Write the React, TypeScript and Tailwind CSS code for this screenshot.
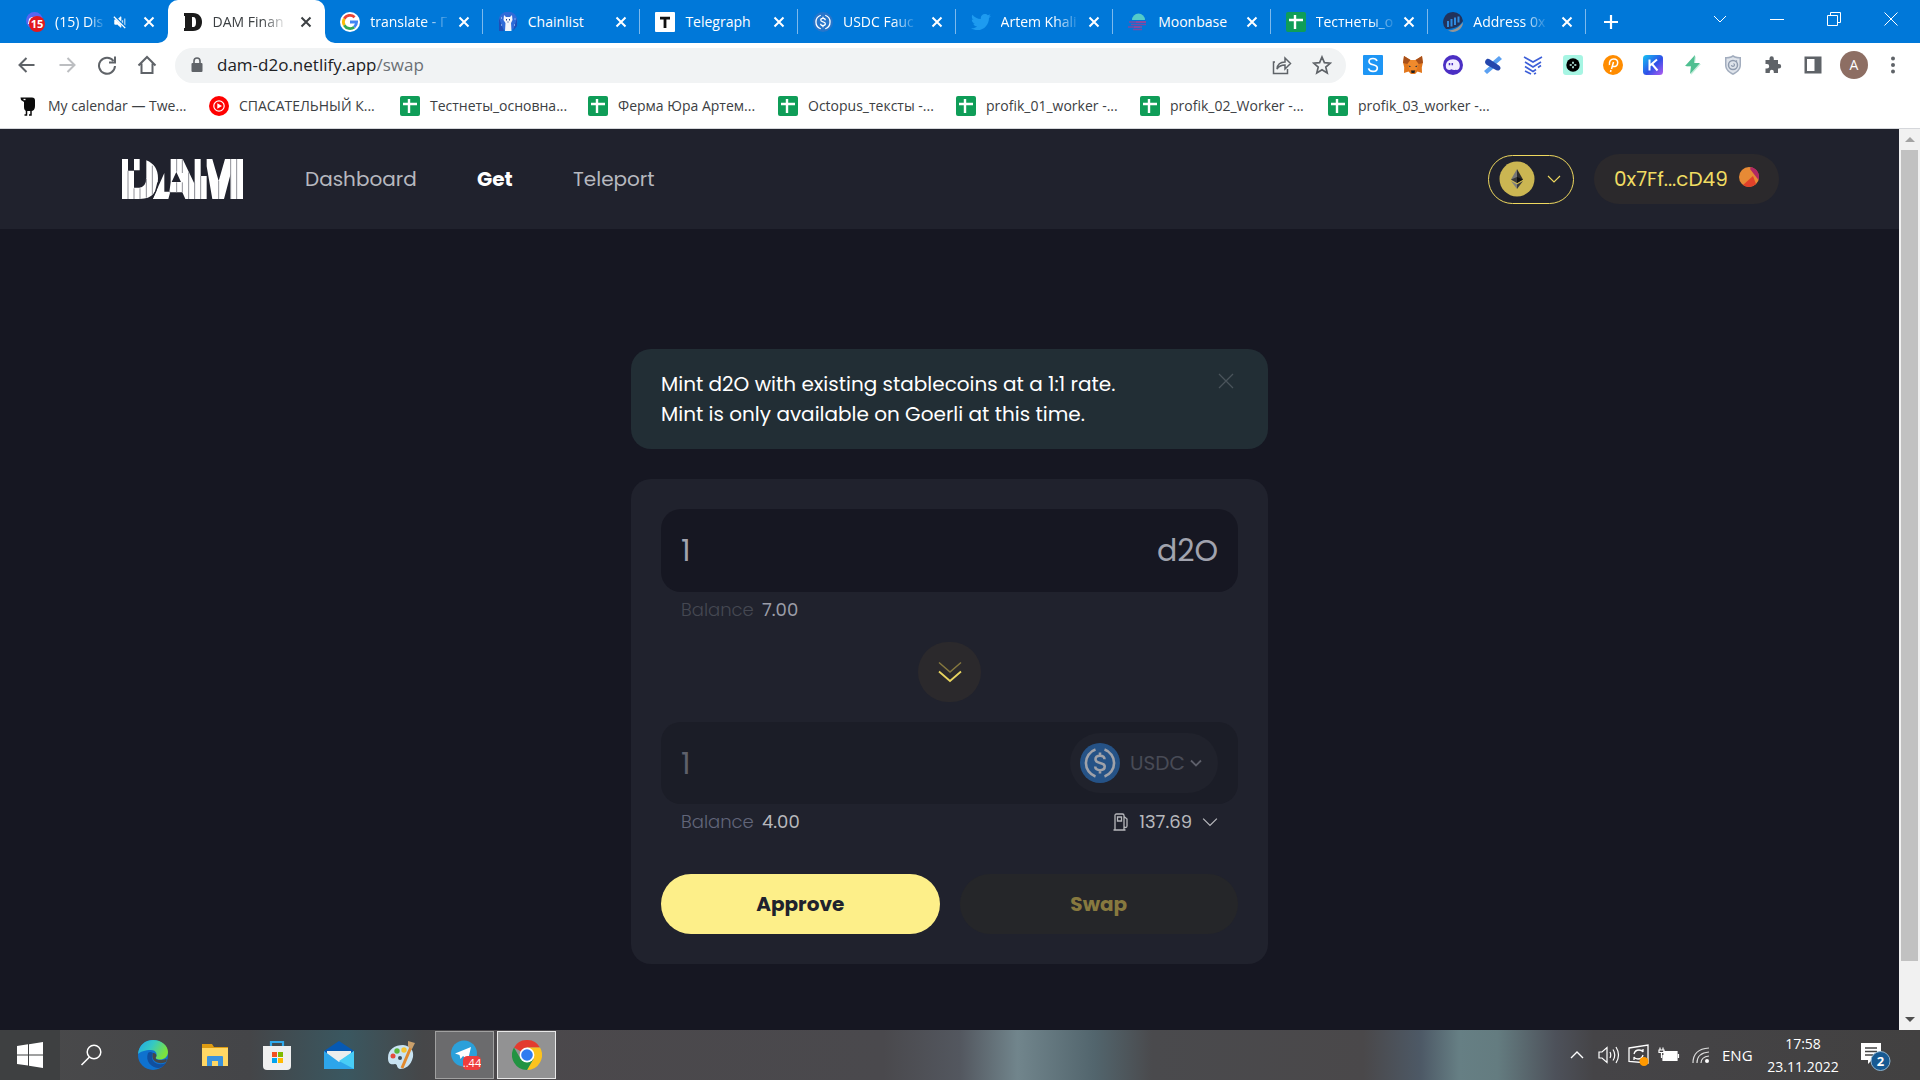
import React from "react";
import type { ReactNode } from "react";
import { FaTwitter } from "react-icons/fa";

const ui = "font-['Segoe_UI','Open_Sans',sans-serif]";

function Svg({ box, className, children }: { box: string; className: string; children: ReactNode }) {
  return (
    <svg viewBox={box} className={className} fill="none" aria-hidden="true">
      {children}
    </svg>
  );
}

function SheetIcon() {
  return (
    <Svg box="0 0 20 20" className="h-5 w-5 shrink-0">
      <rect width="20" height="20" rx="2" fill="#0f9d58" />
      <path d="M9 3v14M3 8h14" stroke="#fff" strokeWidth="2.4" />
    </Svg>
  );
}

function UsdcIcon({ className, color }: { className: string; color: string }) {
  return (
    <Svg box="0 0 40 40" className={className}>
      <circle cx="20" cy="20" r="20" fill={color} />
      <g stroke="currentColor" strokeWidth="2.6">
        <path d="M15.500 6.500A14.300 14.300 0 0 0 15.500 33.500M24.500 6.500A14.300 14.300 0 0 1 24.500 33.500" />
        <path d="M24.500 16.300c0-2.500-2-3.600-4.500-3.600s-4.500 1.200-4.500 3.500c0 2.600 2.300 3.200 4.500 3.700s4.700 1.100 4.700 3.700c0 2.400-2.200 3.600-4.700 3.600s-4.800-1.200-4.800-3.800M20 9.500v3.400M20 27v3.500" />
      </g>
    </Svg>
  );
}

const favicons: Record<string, ReactNode> = {
  discord: (
    <Svg box="0 0 20 20" className="h-5 w-5 shrink-0">
      <circle cx="9.500" cy="8.500" r="8.500" fill="#5865f2" />
      <path d="M4 7c2-3 9-3 11 0l1 5H3z" fill="#fff" />
      <circle cx="12" cy="12" r="8" fill="#e3171e" />
      <text x="12" y="16" textAnchor="middle" fontSize="11" fontWeight="700" fill="#fff" fontFamily="Open Sans">15</text>
    </Svg>
  ),
  dam: (
    <Svg box="0 0 20 20" className="h-5 w-5 shrink-0">
      <path d="M1 1h9c6 0 9 4 9 9s-3 9-9 9H1V16h1V4H1zM9 5v10h1c2.500 0 3-2 3-5s-.5-5-3-5z" fill="#1b1b1b" fillRule="evenodd" />
    </Svg>
  ),
  google: (
    <Svg box="0 0 20 20" className="h-5 w-5 shrink-0">
      <circle cx="10" cy="10" r="10" fill="#fff" />
      <g strokeWidth="2.800">
        <path d="M4.300 6.700A6.600 6.600 0 0 1 14.600 5.200" stroke="#ea4335" />
        <path d="M4.300 6.700A6.600 6.600 0 0 0 4.300 13.300" stroke="#fbbc05" />
        <path d="M4.300 13.300A6.600 6.600 0 0 0 14.200 15.100" stroke="#34a853" />
        <path d="M14.200 15.100A6.600 6.600 0 0 0 16.600 10H10" stroke="#4285f4" />
      </g>
    </Svg>
  ),
  chainlist: (
    <Svg box="0 0 20 20" className="h-5 w-5 shrink-0">
      <circle cx="10" cy="9" r="9.500" fill="#2f6bd8" />
      <path d="M1 6v13h5zM19 6v8l-4 5z" fill="#1d4fb8" />
      <path d="M6 3l2 2h4l2-2 .5 5-1.500 3 .5 8H7l.5-8L5.500 8z" fill="#f2f5fb" />
      <path d="M8.500 7v1.500M11.500 7v1.500M9.500 10h1" stroke="#24418a" />
      <path d="M3 6h1M16.500 7h1M3 13h1M16 13h1" stroke="#cfe0ff" />
    </Svg>
  ),
  telegraph: (
    <Svg box="0 0 20 20" className="h-5 w-5 shrink-0">
      <rect width="20" height="20" rx="1" fill="#fff" />
      <path d="M5 6.200h10M10 5v11" stroke="#111" strokeWidth="2.800" />
    </Svg>
  ),
  usdc: <UsdcIcon className="h-5 w-5 shrink-0 text-white" color="#2775ca" />,
  twitter: <FaTwitter className="h-5 w-5 shrink-0 text-[#1d9bf0]" />,
  moonbase: (
    <Svg box="0 0 20 20" className="h-5 w-5 shrink-0">
      <path d="M4 8a6.500 6.500 0 0 1 13 0z" fill="#53cbc9" />
      <path d="M1 10h17M3 12.500h15M0 15h12M5 17.500h9" stroke="#7a4aa5" strokeWidth="1.500" />
      <path d="M8 10h10M6 15h8" stroke="#b8408f" strokeWidth="1" />
    </Svg>
  ),
  sheet: <SheetIcon />,
  etherscan: (
    <Svg box="0 0 20 20" className="h-5 w-5 shrink-0">
      <path d="M10 0a10 10 0 0 1 10 9c-4 6-9 8-17 8A10 10 0 0 1 10 0z" fill="#21325b" />
      <path d="M20 10A10 10 0 0 1 5 18.600C12 18 17 15 20 10z" fill="#979695" />
      <path d="M5 9v6M8.500 7v7.500M12 5.500v7.500M15.500 4.500v6" stroke="#2f8be0" strokeWidth="2" />
    </Svg>
  ),
};

const fade = "[mask-image:linear-gradient(to_right,#000_70%,rgba(0,0,0,0.15))]";

const tabs = [
  { icon: "discord", title: "(15) Dis", muted: true, mask: fade },
  { icon: "dam", title: "DAM Finan", active: true, mask: fade },
  { icon: "google", title: "translate - Г", mask: fade },
  { icon: "chainlist", title: "Chainlist", mask: "" },
  { icon: "telegraph", title: "Telegraph", mask: "" },
  { icon: "usdc", title: "USDC Fauc", mask: fade },
  { icon: "twitter", title: "Artem Khali", mask: fade },
  { icon: "moonbase", title: "Moonbase", mask: "" },
  { icon: "sheet", title: "Тестнеты_о", mask: fade },
  { icon: "etherscan", title: "Address 0x", mask: fade },
];

function TabStrip() {
  return (
    <div className={`flex h-[43px] items-center bg-[#0078d9] pl-2.5 text-[14px] text-white ${ui}`}>
      <div className="flex h-full w-[1576px] min-w-0 shrink">
        {tabs.map((t, i) => (
          <div
            key={t.title}
            className={`relative flex h-full min-w-0 flex-1 items-center pl-[15px] pr-[9px] ${t.active ? "rounded-t-[10px] bg-white text-[#3c4043]" : ""}`}
          >
            {favicons[t.icon]}
            <span className={`ml-2.5 whitespace-nowrap ${t.mask}`}>{t.title}</span>
            {t.muted && (
              <Svg box="0 0 16 16" className="ml-2.5 h-3.5 w-3.5 shrink-0">
                <path d="M2 5.500h3L9 2v12L5 10.500H2zM11 6v4M13.500 4v8" fill="#fff" stroke="#fff" />
                <path d="M1 1l14 14" stroke="#0078d9" strokeWidth="2.500" />
                <path d="M1 2l13 13" stroke="#fff" strokeWidth="1.500" />
              </Svg>
            )}
            <button aria-label={`Close ${t.title}`} className="ml-auto flex h-5 w-5 shrink-0 items-center justify-center">
              <Svg box="0 0 12 12" className="h-3 w-3">
                <path d="M1.500 1.500l9 9M10.500 1.500l-9 9" stroke="currentColor" strokeWidth="2" />
              </Svg>
            </button>
            {i > 1 && <span className="absolute right-0 top-[9px] h-[25px] w-px bg-[#7db9ec]" />}
            {t.active && (
              <>
                <Svg box="0 0 10 10" className="absolute -left-2.5 bottom-0 h-2.5 w-2.5">
                  <path d="M10 0v10H0A10 10 0 0 0 10 0z" fill="#fff" />
                </Svg>
                <Svg box="0 0 10 10" className="absolute -right-2.5 bottom-0 h-2.5 w-2.5">
                  <path d="M0 0v10h10A10 10 0 0 1 0 0z" fill="#fff" />
                </Svg>
              </>
            )}
          </div>
        ))}
      </div>
      <button aria-label="New tab" className="ml-[17px] h-4 w-4 shrink-0">
        <Svg box="0 0 16 16" className="h-4 w-4"><path d="M8 1v14M1 8h14" stroke="#fff" strokeWidth="2.200" /></Svg>
      </button>
      <div className="ml-auto flex h-[38px] shrink-0 items-center self-start">
        <button aria-label="Search tabs" className="flex w-[57px] justify-center">
          <Svg box="0 0 14 14" className="h-3.5 w-3.5"><path d="M1 4l6 6 6-6" stroke="#fff" /></Svg>
        </button>
        <button aria-label="Minimize" className="flex w-[57px] justify-center">
          <Svg box="0 0 14 14" className="h-3.5 w-3.5"><path d="M0 7.500h14" stroke="#fff" /></Svg>
        </button>
        <button aria-label="Restore" className="flex w-[57px] justify-center">
          <Svg box="0 0 14 14" className="h-3.5 w-3.5"><path d="M.5 3.500h10v10H.5zM3.500 3V.5h10v10H11" stroke="#fff" /></Svg>
        </button>
        <button aria-label="Close window" className="flex w-[58px] justify-center">
          <Svg box="0 0 14 14" className="h-3.5 w-3.5"><path d="M.5.5l13 13M13.500.5l-13 13" stroke="#fff" /></Svg>
        </button>
      </div>
    </div>
  );
}

const extensions: { name: string; art: ReactNode }[] = [
  { name: "S", art: (<><rect width="20" height="20" rx="1" fill="#1e96f5" /><path d="M14 6c-.6-1.800-2-2.500-4-2.500-2.400 0-4 1.200-4 3C6 11 14.300 8.500 14.300 13c0 2-1.800 3.400-4.300 3.400-2.300 0-4-1-4.500-3" stroke="#fff" strokeWidth="1.700" /></>) },
  { name: "MetaMask", art: (<><path d="M1 1l6.500 4h5L19 1l.8 7-1 4.500L19 18l-4.500-1.500L12 19H8l-2.500-2.500L1 18l.2-5.500-1-4.500z" fill="#e2761b" /><path d="M1 1l6.500 4-3 4L0 8zM19 1l-6.500 4 3 4 4.500-1z" fill="#a8501a" /><path d="M4.500 9l3-4h5l3 4-2 6h-7z" fill="#f08a2c" /><path d="M8 15.500h4l-.5 2.500h-3z" fill="#20201f" /><path d="M5.500 10.500l2.500.8-1.500 1zM14.500 10.500l-2.500.8 1.500 1z" fill="#233447" /></>) },
  { name: "Phantom", art: (<><circle cx="10" cy="10" r="10" fill="#4b2fc4" /><path d="M3 12.500C2 7 6 4.200 10 4.200c4.500 0 7 3 6.800 6.800-.2 3-2 4.300-4 3.800-1.800.6-3.400.2-4.300-.5C6.500 15.500 3.500 15 3 12.500z" fill="#f1edff" /><path d="M6.500 8v2.300M9.300 8v2.300" stroke="#4b2fc4" strokeWidth="1.500" /></>) },
  { name: "Satellite", art: (<><path d="M4 19l-3-3 7-6 3 3zM16 1l3 3-7 6-3-3z" fill="#5ba1f2" /><path d="M2.500 5.500c1-2 3-2 4.500-1l9 6c2 1.500 2 3.500.5 4.500s-3 .5-4.500-.5L4 10C2 8.500 1.500 7 2.500 5.500z" fill="#2446ad" /></>) },
  { name: "Layers", art: (<path d="M1 2l9 5 9-5M2 7l8 5 8-5M2 11.500l8 5 3-2M2 16l6 3M15 12.500l3-2M11 19l2-1" stroke="#3d5fd8" strokeWidth="1.600" />) },
  { name: "Dots", art: (<><rect width="20" height="20" rx="3" fill="#a6f5e3" /><circle cx="10" cy="10" r="6.700" fill="#000" /><path d="M10 6.700v2M10 11.300v2M6.700 10h2M11.300 10h2" stroke="#c9fff4" strokeWidth="1.600" /></>) },
  { name: "Polkadot", art: (<><circle cx="10" cy="10" r="10" fill="#ff8c00" /><path d="M8.500 14l2-7M6.500 10c-.7-4 1.500-6 4.200-6 2.500 0 4 1.600 4 3.800 0 2.700-2 4-4.700 3.800M8 15l-.5 2" stroke="#fff" strokeWidth="1.500" /></>) },
  { name: "Keplr", art: (<><defs><linearGradient id="kp" x1="0" y1="0" x2="1" y2="1"><stop stopColor="#15c4f3" /><stop offset=".55" stopColor="#2f50e8" /><stop offset="1" stopColor="#b35cf0" /></linearGradient></defs><rect width="20" height="20" rx="3.500" fill="url(#kp)" /><path d="M6.500 4.500v11M14 4.500l-7 6M9 9l5.500 6.500" stroke="#fff" strokeWidth="2" /></>) },
  { name: "Bolt", art: (<><path d="M13 1L3 12h6l-1 8 10-11h-6z" fill="#c3ecd9" /><path d="M12 0L2 11h6l-1 8L17 8h-6z" fill="#4fbf91" /></>) },
  { name: "Shield", art: (<><path d="M10 0c3 2 6 2 8 2v8c0 5-4 8-8 10-4-2-8-5-8-10V2c2 0 5 0 8-2z" fill="#a2adbe" /><path d="M10 2c2 1.300 4.500 1.500 6.500 1.600V10c0 4-3 6.500-6.500 8.300C6.500 16.500 3.500 14 3.500 10V3.600C5.500 3.500 8 3.300 10 2z" fill="#dfe4eb" /><circle cx="10" cy="10" r="4.500" stroke="#8f9bae" strokeWidth="1.500" /><path d="M8.500 10a1.500 1.500 0 1 0 2-1.500M13 5.500l1 1" stroke="#8f9bae" strokeWidth="1.200" /></>) },
  { name: "Extensions", art: (<path d="M6.500 3.500a2 2 0 0 1 4.300 0V5H15v4h1a2.200 2.200 0 0 1 0 4.400h-1V18h-4.200v-1.200a2 2 0 0 0-4 0V18H2.500v-4.500H4a2.200 2.200 0 0 0 0-4.400H2.500V5h4z" fill="#5f6368" />) },
  { name: "Side panel", art: (<path fillRule="evenodd" d="M1.500 1.500h17v17h-17zM4 4v12h7.500V4z" fill="#5f6368" />) },
];

function Toolbar() {
  return (
    <div className={`flex h-11 items-center bg-white pl-[17px] text-[#5f6368] ${ui}`}>
      {[
        ["Back", "M17.500 10h-15M9.500 3l-7 7 7 7", "text-[#5f6368]"],
        ["Forward", "M2.500 10h15M10.500 3l7 7-7 7", "text-[#bcbec1]"],
        ["Reload", "M16.500 6A8 8 0 1 0 18 11M18 1.500V7.500H12", "text-[#5f6368]"],
        ["Home", "M1.500 10.500L10 2l8.500 8.500M4.500 8.500V18h11V8.500", "text-[#5f6368]"],
      ].map(([n, d, c]) => (
        <button key={n} aria-label={n} className={`mr-5 h-5 w-5 shrink-0 ${c}`}>
          <Svg box="0 0 20 20" className="h-5 w-5"><path d={d} stroke="currentColor" strokeWidth="2" /></Svg>
        </button>
      ))}
      <div className="-ml-0.5 flex h-[35px] min-w-0 flex-1 items-center rounded-full bg-[#f1f3f4] px-3.5">
        <Svg box="0 0 16 18" className="h-[18px] w-4 shrink-0">
          <rect x="2.500" y="7" width="11" height="9" rx="1" fill="#5f6368" />
          <path d="M5 8V5a3 3 0 0 1 6 0v3" stroke="#5f6368" strokeWidth="1.600" />
        </Svg>
        <a href="#swap" className="ml-3 flex-1 text-[17px] text-[#202124]">
          dam-d2o.netlify.app<span className="text-[#6b7075]">/swap</span>
        </a>
        <button aria-label="Share" className="mr-5 h-5 w-5">
          <Svg box="0 0 20 20" className="h-5 w-5"><path d="M3 7H1.500v11.500h14V14M5 14c.5-5 3-7 8-7V3l5.500 5.500L13 14v-4c-4 0-6 1-8 4z" stroke="#5f6368" strokeWidth="1.500" /></Svg>
        </button>
        <button aria-label="Bookmark this tab" className="h-5 w-5">
          <Svg box="0 0 20 20" className="h-5 w-5"><path d="M10 2l2.400 5.600 6 .5-4.600 4 1.400 5.900L10 14.800 4.800 18l1.400-5.900-4.600-4 6-.5z" stroke="#5f6368" strokeWidth="1.700" /></Svg>
        </button>
      </div>
      <div className="ml-[17px] flex shrink-0 items-center gap-5">
        {extensions.map((e) => (
          <button key={e.name} aria-label={e.name} className="h-5 w-5">
            <Svg box="0 0 20 20" className="h-5 w-5">{e.art}</Svg>
          </button>
        ))}
        <button aria-label="Profile" className="-mx-[3px] h-7 w-7 rounded-full bg-[#8d6e63] text-center text-[14px] leading-7 text-white">A</button>
        <button aria-label="Menu" className="-ml-0.5 mr-[17px] h-5 w-5">
          <Svg box="0 0 20 20" className="h-5 w-5">
            <g fill="#5f6368"><circle cx="10" cy="3.500" r="2" /><circle cx="10" cy="10" r="2" /><circle cx="10" cy="16.500" r="2" /></g>
          </Svg>
        </button>
      </div>
    </div>
  );
}

const bookmarks = [
  { label: "My calendar — Twe...", icon: "bird", w: "w-[191px]" },
  { label: "СПАСАТЕЛЬНЫЙ К...", icon: "music", w: "w-[191px]" },
  { label: "Тестнеты_основна...", icon: "sheet", w: "w-[188px]" },
  { label: "Ферма Юра Артем...", icon: "sheet", w: "w-[190px]" },
  { label: "Octopus_тексты -...", icon: "sheet", w: "w-[178px]" },
  { label: "profik_01_worker -...", icon: "sheet", w: "w-[184px]" },
  { label: "profik_02_Worker -...", icon: "sheet", w: "w-[188px]" },
  { label: "profik_03_worker -...", icon: "sheet", w: "w-[188px]" },
];

function Bookmarks() {
  return (
    <nav className={`flex h-[42px] border-b border-[#d5d7db] bg-white pb-1 pl-[18px] text-[14px] text-[#3c4043] ${ui}`}>
      {bookmarks.map((b) => (
        <a key={b.label} href="#bookmark" className={`flex items-center gap-2.5 whitespace-nowrap ${b.w}`}>
          {b.icon === "sheet" && <SheetIcon />}
          {b.icon === "bird" && (
            <Svg box="0 0 20 20" className="h-5 w-5 shrink-0">
              <path d="M2.500 1.500H14q3 0 3 3V10q0 5-4 5H9q-3 0-3-4V6L3 4z" fill="#0b0b0b" />
              <path d="M8.500 14v5H6.500M13 14v5h-2" stroke="#0b0b0b" strokeWidth="1.500" />
              <path d="M5.500 3.500h2" stroke="#fff" strokeWidth="1.300" />
            </Svg>
          )}
          {b.icon === "music" && (
            <Svg box="0 0 20 20" className="h-5 w-5 shrink-0">
              <circle cx="10" cy="10" r="10" fill="#f00" />
              <circle cx="10" cy="10" r="5.200" stroke="#fff" strokeWidth="1.200" />
              <path d="M8.300 7.200v5.600L13 10z" fill="#fff" />
            </Svg>
          )}
          {b.label}
        </a>
      ))}
    </nav>
  );
}

function DamLogo() {
  return (
    <svg viewBox="0 0 363 120" className="h-10 w-[121px] shrink-0" role="img" aria-label="DAM">
      <g fill="#fff">
        <path d="M0 0h18v35h18v85H0zM36 0h17v34H36z" />
        <path d="M73 4q35 14 35 54q0 62-54 62H36V86h16q21-4 21-30z" />
        <path fillRule="evenodd" d="M92 120L127 42v56h18L139 120zM146 0h36l36 76v44h-28l-9-20h-17l-22 0 4-30zM163 39l-14 30h28z" />
        <path d="M218 0h18v51h18v69h-36zM254 0h17l19 66 19-66h54v120h-37V44l-20 76h-35L254 22z" />
      </g>
      <path d="M108 70Q104 96 90 120" stroke="#20222d" strokeWidth="4" fill="none" />
      <path d="M18 35v85M36 88v32M54 88v32M73 60v56M91 20v88M164 0v38M181 0v42M164 70v30M181 70v30M200 40v80M218 70v50M236 51v69M290 66v54M326 0v120M344 0v120" stroke="#8f9097" strokeWidth="3" fill="none" />
    </svg>
  );
}

function Chevron({ className }: { className: string }) {
  return <Svg box="0 0 14 14" className={className}><path d="M1 4l6 6 6-6" stroke="currentColor" strokeWidth="1.100" /></Svg>;
}

function Header() {
  return (
    <header className="flex h-[100px] shrink-0 items-center bg-[#20222d] px-[120px] text-[20px] text-[#b6b8bf]">
      <div className="ml-0.5"><DamLogo /></div>
      <nav className="ml-[62px] flex gap-[60px]">
        <a href="#dashboard" className="w-[112px]">Dashboard</a>
        <a href="#get" className="w-9 font-bold text-white">Get</a>
        <a href="#teleport">Teleport</a>
      </nav>
      <button aria-label="Select network" className="ml-auto flex h-[49px] w-[86px] items-center justify-between rounded-full border border-[#efd95f] pl-2.5 pr-3 text-[#efd95f]">
        <Svg box="0 0 36 36" className="h-9 w-9">
          <circle cx="18" cy="18" r="17.500" fill="#cbb652" />
          <path d="M18 8l-6 10.500 6 3.500z" fill="#777" />
          <path d="M18 8l6 10.500-6 3.500z" fill="#2d2d2d" />
          <path d="M12 18.500l6-2.500v6z" fill="#3a3a3a" />
          <path d="M18 16l6 2.500-6 3.500z" fill="#111" />
          <path d="M12 20l6 8v-4.500z" fill="#808080" />
          <path d="M24 20l-6 8v-4.500z" fill="#3a3a3a" />
        </Svg>
        <Chevron className="h-3.5 w-3.5" />
      </button>
      <button className="ml-5 flex h-[50px] w-[185px] items-center justify-between rounded-full bg-[#2b292c] px-5 text-[#f0dc62]">
        0x7Ff...cD49
        <Svg box="0 0 20 20" className="mb-1 h-5 w-5">
          <circle cx="10" cy="10" r="10" fill="#e78a35" />
          <path d="M12 0a10 10 0 0 1 7.500 13L11 2z" fill="#b12863" />
          <path d="M4 18l10-9 3 8a10 10 0 0 1-13 1z" fill="#e1412a" />
        </Svg>
      </button>
    </header>
  );
}

function SwapPage() {
  return (
    <main className="flex-1 bg-[#161722] pt-[120px]">
      <div className="mx-auto w-[637px]">
        <section className="flex h-[100px] items-start justify-between rounded-[20px] bg-[#222e35] px-[30px] pt-5 text-[20px] leading-[30px] text-white">
          <p>
            Mint d2O with existing stablecoins at a 1:1 rate.
            <br />
            Mint is only available on Goerli at this time.
          </p>
          <button aria-label="Dismiss" className="mr-1 mt-1">
            <Svg box="0 0 16 16" className="h-4 w-4"><path d="M1 1l14 14M15 1L1 15" stroke="#4a545b" strokeWidth="1.300" /></Svg>
          </button>
        </section>
        <form className="mt-[30px] rounded-[20px] bg-[#20222d] p-[30px]" onSubmit={(e) => e.preventDefault()}>
          <div className="flex h-[83px] items-center rounded-[20px] bg-[#161722] px-5 text-[30px] text-[#a1a3ae]">
            <input aria-label="d2O amount" defaultValue="1" className="min-w-0 flex-1 bg-transparent outline-none" />
            <span>d2O</span>
          </div>
          <p className="flex h-[50px] gap-2.5 px-5 pt-1 text-[18px] text-[#454852]">
            <span className="w-[71px] font-light">Balance</span>
            <span className="text-[#9b9da8]">7.00</span>
          </p>
          <button type="button" aria-label="Switch direction" className="mx-auto flex h-[60px] w-[63px] items-center justify-center rounded-full bg-[#2b292c]">
            <Svg box="0 0 24 24" className="h-6 w-6">
              <path d="M1 2.500L12 12 23 2.500" stroke="#85783f" strokeWidth="1.500" />
              <path d="M1 11.500L12 21l11-9.500" stroke="#e8d45f" strokeWidth="1.800" />
            </Svg>
          </button>
          <div className="mt-5 flex h-[82px] items-center rounded-[20px] bg-[#1b1d27] px-5 text-[30px] text-[#5e606b]">
            <input aria-label="USDC amount" defaultValue="1" className="min-w-0 flex-1 bg-transparent outline-none" />
            <label className="flex h-[60px] w-[148px] items-center rounded-full bg-[#20222c] pl-2.5 text-[20px] text-[#484b56]">
              <UsdcIcon className="h-10 w-10 text-[#a0a2a9]" color="#255286" />
              <select aria-label="Token" className="ml-2.5 w-[60px] appearance-none bg-transparent outline-none">
                <option>USDC</option>
              </select>
              <Svg box="0 0 12 12" className="h-3 w-3"><path d="M1 3.500L6 8.500 11 3.500" stroke="#5e606b" strokeWidth="1.800" /></Svg>
            </label>
          </div>
          <div className="flex h-[70px] items-start px-5 pt-1 text-[18px] text-[#62667a]">
            <span className="w-[71px] font-light">Balance</span>
            <span className="ml-2.5 text-[#b7b8bc]">4.00</span>
            <button type="button" className="ml-auto flex items-center gap-2.5 text-[#b7b8bc]">
              <Svg box="0 0 16 18" className="h-[18px] w-4">
                <path d="M2 17V2.500Q2 1 3.500 1h6Q11 1 11 2.500V17M.5 17h12M4.500 4h4v4h-4zM11 3.500l3 2.500v7q0 1.500-1.500 1.500T11 13" stroke="currentColor" strokeWidth="1.300" />
              </Svg>
              <span>137.69</span>
              <Chevron className="h-4 w-4" />
            </button>
          </div>
          <div className="grid grid-cols-2 gap-5 text-[20px] font-bold">
            <button type="submit" className="h-[60px] rounded-full bg-[#fdef89] text-[#20222d]">Approve</button>
            <button type="button" className="h-[60px] rounded-full bg-[#252629] text-[#87793f]">Swap</button>
          </div>
        </form>
      </div>
    </main>
  );
}

function Scrollbar() {
  return (
    <div className="flex w-[21px] shrink-0 flex-col items-center justify-between bg-[#f1f1f1]">
      <Svg box="0 0 10 5" className="my-2 h-[5px] w-2.5 shrink-0"><path d="M0 5l5-5 5 5z" fill="#a3a3a3" /></Svg>
      <div className="mb-auto h-[90%] w-[17px] bg-[#c1c1c1]" />
      <Svg box="0 0 10 5" className="my-2 h-[5px] w-2.5 shrink-0"><path d="M0 0l5 5 5-5z" fill="#505050" /></Svg>
    </div>
  );
}

const apps: { name: string; art: ReactNode }[] = [
  { name: "Edge", art: (<><defs><linearGradient id="eg" x1="0" y1="0" x2="1" y2=".4"><stop stopColor="#21a6e8" /><stop offset=".5" stopColor="#35c8c3" /><stop offset="1" stopColor="#7be23e" /></linearGradient></defs><circle cx="15" cy="15" r="15" fill="#0f72cf" /><path d="M0 14C1 5 7 0 15 0c9 0 15 6 15 12 0 5-4 7.500-8 7.500-3.500 0-5-1.200-4-2.500 1.500-2 .5-7-5-7C7 10 2 12 0 14z" fill="url(#eg)" /><path d="M10 13c-3 8 3 15 11 15 3-.5 6-3 7-5-7 3-14 0-14-6 0-2 .5-3 1-4-2-1.500-4-1-5 0z" fill="#114f9e" /><path d="M15 13c-2 5 1 9 6 10 3 .5 6-.5 7-1 1-2 1-3 0-3-2 1-4 1-6 1-4 0-5-1.500-4-3 1-1.500 0-4-3-4z" fill="#464748" /></>) },
  { name: "File Explorer", art: (<><path d="M2 4h10l2 3h14v19H2z" fill="#dd9b12" /><path d="M2 8h26v18H2z" fill="#ffd764" /><path d="M7 26v-9q0-1 1-1h14q1 0 1 1v9h-5v-5h-6v5z" fill="#3b92dc" /></>) },
  { name: "Store", art: (<><path d="M9 8V2h12v6" stroke="#2fa9ec" strokeWidth="2.200" /><path d="M1 6h28v20q0 4-4 4H5q-4 0-4-4z" fill="#efefef" /><path d="M10 12h5v5h-5z" fill="#f25022" /><path d="M16 12h5v5h-5z" fill="#7fba00" /><path d="M10 18h5v5h-5z" fill="#00a4ef" /><path d="M16 18h5v5h-5z" fill="#ffb900" /></>) },
  { name: "Mail", art: (<><path d="M0 11L15 1l15 10v3H0z" fill="#0659b3" /><path d="M3 11h24v12H3z" fill="#ededed" /><path d="M0 11l15 11 15-11v18H0z" fill="#2da5ea" /><path d="M30 11v18L15 21z" fill="#48cdf6" /></>) },
  { name: "Paint", art: (<><path d="M2 18C2 9 9 5 17 5c8 1 11 6 10 12-2 9-8 12-13 12-4-1-2-5-5-5-4 1-7 0-7-6z" fill="#c8e3f2" /><circle cx="7" cy="16" r="2.500" fill="#e44b3c" /><circle cx="11" cy="11" r="2.700" fill="#5bb53d" /><circle cx="18" cy="10" r="2.700" fill="#f6c432" /><circle cx="14" cy="18" r="2" fill="#3b4c59" /><path d="M25 7L16 28" stroke="#e18a2f" strokeWidth="3" /><path d="M22 1l7 2-3 6-4-2z" fill="#c9a06c" /></>) },
];

function Taskbar() {
  return (
    <footer className={`flex h-[50px] shrink-0 items-center bg-[linear-gradient(90deg,#4a4a4b_0%,#444548_13%,#3a5760_18%,#464749_22%,#4b484b_25%,#4a494d_46%,#53575f_50%,#71858c_53%,#52656d_57%,#4a4a4d_60%,#4a484a_71%,#4d5966_74%,#667f84_76%,#647c80_78%,#4d515a_81%,#454447_83%,#424141_100%)] text-[15px] text-white ${ui}`}>
      <button aria-label="Start" className="flex h-full w-[60px] items-center justify-center bg-[#3e4041]">
        <Svg box="0 0 26 26" className="h-[26px] w-[26px]"><path d="M0 4l11-1.700V12.500H0zM12 2.200L26 0v12.500H12zM0 13.500h11v10L0 22zM12 13.500h14V26l-14-2.200z" fill="#fff" /></Svg>
      </button>
      <button aria-label="Search" className="flex h-full w-[62px] items-center justify-center">
        <Svg box="0 0 22 22" className="h-[22px] w-[22px]"><circle cx="14" cy="8" r="6.800" stroke="#fff" strokeWidth="1.500" /><path d="M9.500 13L1.500 21" stroke="#fff" strokeWidth="1.600" /></Svg>
      </button>
      {apps.map((a) => (
        <button key={a.name} aria-label={a.name} className="flex h-full w-[62px] items-center justify-center">
          <Svg box="0 0 30 30" className="h-[30px] w-[30px]">{a.art}</Svg>
        </button>
      ))}
      <button aria-label="Telegram" className="ml-[3px] flex h-12 w-[59px] items-center justify-center border border-[#a0a0a0] bg-[#6b6b6d]">
        <Svg box="0 0 32 30" className="h-[30px] w-8">
          <circle cx="15" cy="13.500" r="13" fill="#2ba0da" />
          <path d="M6 13.500L22 7l-3 13-5-4-2.500 3-1-4z" fill="#fff" />
          <rect x="14" y="16" width="18" height="14" rx="4.500" fill="#ee3d3d" />
          <text x="23" y="27" textAnchor="middle" fontSize="11" fill="#fff" fontFamily="Open Sans">..44</text>
        </Svg>
      </button>
      <button aria-label="Chrome" className="ml-[3px] flex h-12 w-[59px] items-center justify-center border border-[#e8e8e8] bg-[#929293]">
        <Svg box="0 0 30 30" className="h-[30px] w-[30px]">
          <path d="M15 15L2 7.500A15 15 0 0 1 28 7.500H15z" fill="#e33b2e" />
          <path d="M28 7.500A15 15 0 0 1 15 30l6.500-11.200L15 7.500z" fill="#fcc31e" />
          <path d="M2 7.500A15 15 0 0 0 15 30l6.500-11.200-13 0z" fill="#229342" />
          <circle cx="15" cy="15" r="7.400" fill="#fff" />
          <circle cx="15" cy="15" r="5.800" fill="#2f7cf0" />
        </Svg>
      </button>
      <div className="ml-auto flex items-center">
        <Svg box="0 0 14 14" className="h-3.5 w-3.5"><path d="M1 10l6-6 6 6" stroke="#fff" strokeWidth="1.400" /></Svg>
        <Svg box="0 0 22 20" className="ml-3.5 h-5 w-[22px]"><path d="M1 7h3l5-4.500v15L4 13H1zM12 7q1.500 3 0 6M15 4.500q3.500 5.500 0 11M18 2q5 8 0 16" stroke="#fff" strokeWidth="1.200" /></Svg>
        <Svg box="0 0 22 22" className="ml-2 h-[22px] w-[22px]"><path d="M1 4l19-3v18L1 17.500zM6 10q1-4 5-4 3 0 4 2V5M15 11q-1 4-5 4-3 0-4-2v3" stroke="#fff" strokeWidth="1.300" /><circle cx="16" cy="17.500" r="4.500" fill="#f90" /></Svg>
        <Svg box="0 0 22 20" className="ml-2 h-5 w-[22px]"><path d="M6 6.500h13v9H5v-5h1zM20.500 9v4" fill="#fff" stroke="#fff" strokeWidth="1.200" /><path d="M1 5h5v2.500H1zM2 5V2.500M5 5V2.500M3.500 8v5" stroke="#fff" strokeWidth="1.200" /></Svg>
        <Svg box="0 0 18 18" className="ml-3 h-[18px] w-[18px]"><path d="M1 17Q1 3 17 2M5 17Q5 7 17 6M9 17q0-6 8-7" stroke="#ddd" strokeWidth="1.200" /><circle cx="15" cy="15" r="2" fill="#fff" /></Svg>
        <span className="ml-3 w-[33px]">ENG</span>
        <div className="ml-2 w-[80px] text-center text-[14px] leading-[23px]">
          17:58
          <br />
          23.11.2022
        </div>
        <Svg box="0 0 30 32" className="ml-[18px] mr-[29px] h-8 w-[30px]">
          <path d="M0 4h20v17h-9l-4 4v-4H0z" fill="#fff" />
          <path d="M4 9h12M4 12.500h12M4 16h8" stroke="#444" strokeWidth="1.300" />
          <circle cx="19.500" cy="22" r="9.500" fill="#175a93" stroke="#8fb4ce" />
          <text x="19.500" y="26.500" textAnchor="middle" fontSize="13" fontWeight="700" fill="#fff" fontFamily="Open Sans">2</text>
        </Svg>
      </div>
    </footer>
  );
}

export default function App() {
  return (
    <div className="flex h-screen flex-col overflow-hidden">
      <TabStrip />
      <Toolbar />
      <Bookmarks />
      <div className="flex min-h-0 flex-1">
        <div className="flex min-w-0 flex-1 flex-col overflow-hidden font-['Poppins','Inter',sans-serif]">
          <Header />
          <SwapPage />
        </div>
        <Scrollbar />
      </div>
      <Taskbar />
    </div>
  );
}
